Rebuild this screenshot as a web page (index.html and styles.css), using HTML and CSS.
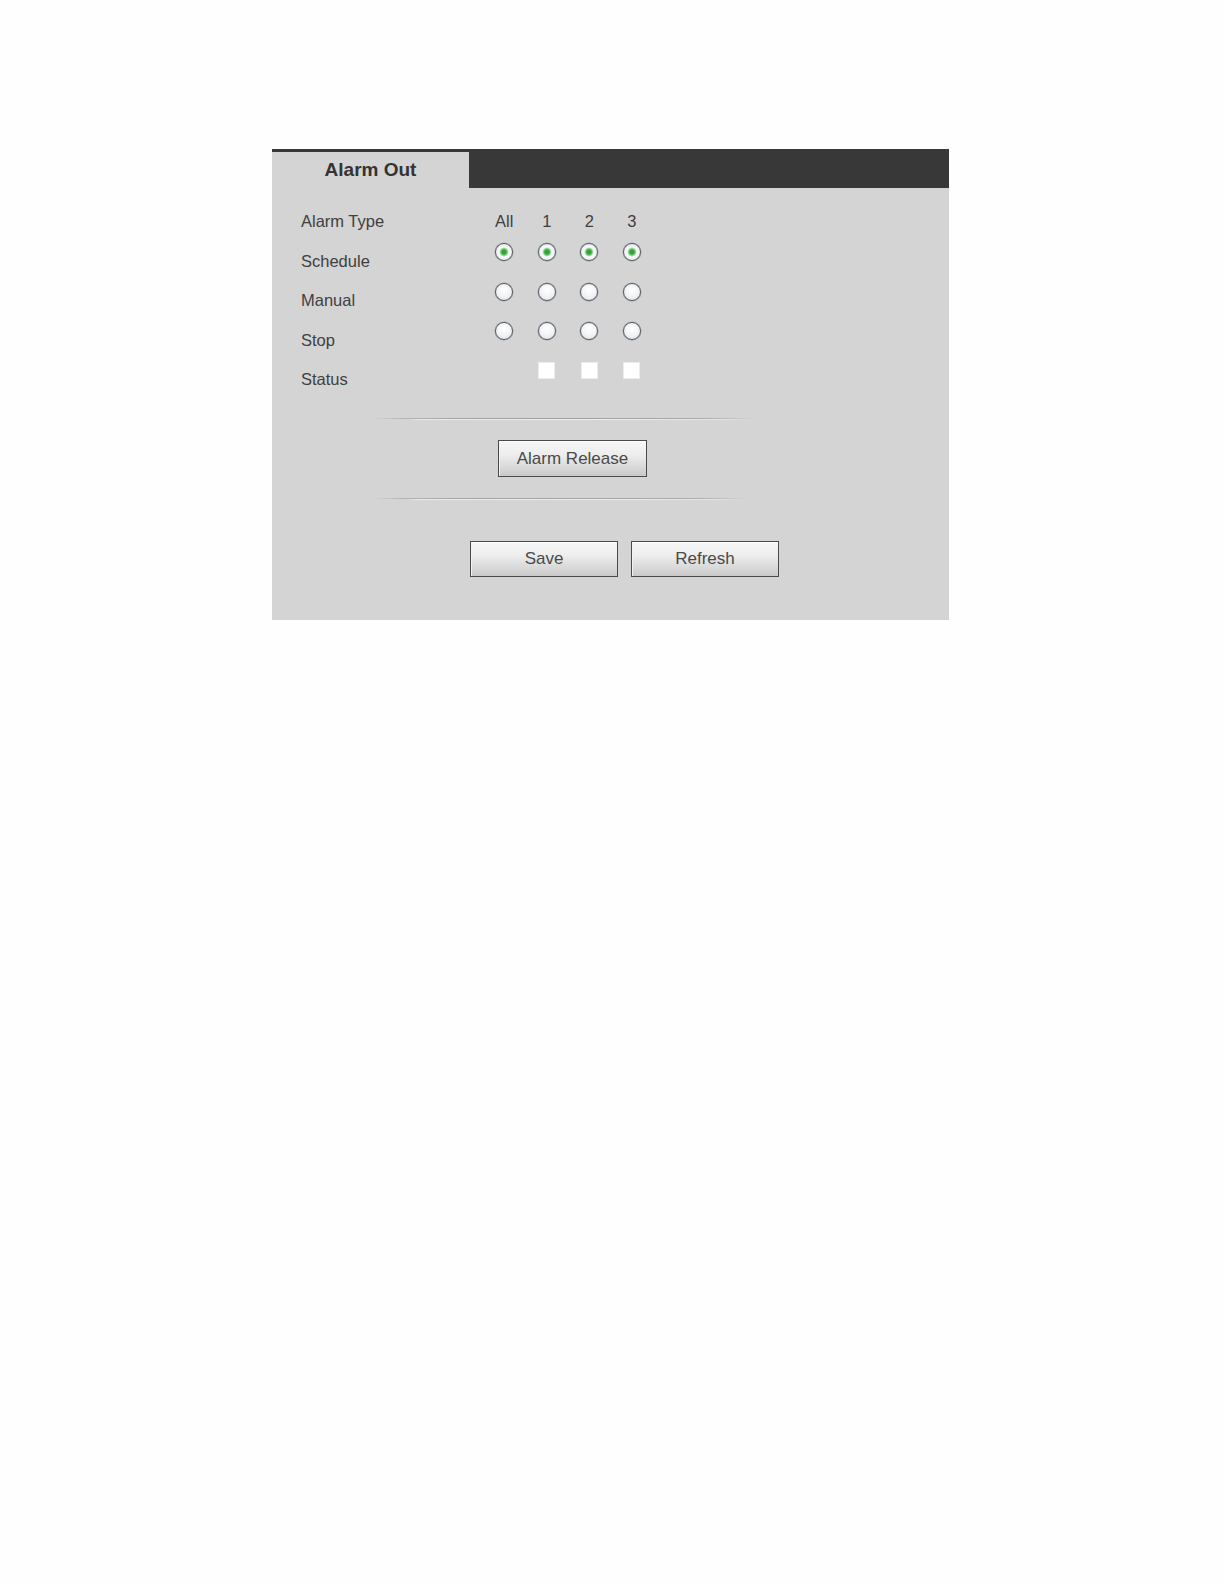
FILE: index.html
```html
<!DOCTYPE html>
<html lang="en">
<head>
<meta charset="utf-8">
<title>Alarm Out</title>
<link rel="stylesheet" href="styles.css">
</head>
<body>
<div class="page">
  <div class="panel">
    <div class="header">
      <div class="tab">Alarm Out</div>
    </div>
    <div class="form">
      <div class="grid">
        <div class="row">
          <div class="label">Alarm Type</div>
          <div class="cell head">All</div>
          <div class="cell head">1</div>
          <div class="cell head">2</div>
          <div class="cell head">3</div>
        </div>
        <div class="row">
          <div class="label">Schedule</div>
          <div class="cell"><span class="radio checked"></span></div>
          <div class="cell"><span class="radio checked"></span></div>
          <div class="cell"><span class="radio checked"></span></div>
          <div class="cell"><span class="radio checked"></span></div>
        </div>
        <div class="row">
          <div class="label">Manual</div>
          <div class="cell"><span class="radio"></span></div>
          <div class="cell"><span class="radio"></span></div>
          <div class="cell"><span class="radio"></span></div>
          <div class="cell"><span class="radio"></span></div>
        </div>
        <div class="row">
          <div class="label">Stop</div>
          <div class="cell"><span class="radio"></span></div>
          <div class="cell"><span class="radio"></span></div>
          <div class="cell"><span class="radio"></span></div>
          <div class="cell"><span class="radio"></span></div>
        </div>
        <div class="row">
          <div class="label">Status</div>
          <div class="cell"></div>
          <div class="cell"><span class="check"></span></div>
          <div class="cell"><span class="check"></span></div>
          <div class="cell"><span class="check"></span></div>
        </div>
      </div>
      <div class="divider divider-a"></div>
      <div class="release-row">
        <button class="btn btn-release" type="button">Alarm Release</button>
      </div>
      <div class="divider divider-b"></div>
      <div class="actions">
        <button class="btn btn-action" type="button">Save</button>
        <button class="btn btn-action" type="button">Refresh</button>
      </div>
    </div>
  </div>
</div>
</body>
</html>
```

FILE: styles.css
```css
html, body {
  margin: 0;
  padding: 0;
  background: #fefefe;
}

body {
  font-family: "Liberation Sans", Arial, sans-serif;
  color: #404040;
}

.page {
  padding: 149px 0 0 272px;
}

.panel {
  width: 677px;
  background: #d4d4d4;
}

.header {
  height: 39px;
  background: #383838;
  display: flex;
  align-items: flex-end;
}

.tab {
  width: 197px;
  height: 36px;
  line-height: 36px;
  background: #d4d4d4;
  text-align: center;
  font-size: 19px;
  font-weight: bold;
  color: #333;
}

.form {
  padding: 15.5px 0 43px 29px;
}

.row {
  display: flex;
  align-items: flex-start;
  height: 39.5px;
}

.label {
  width: 182px;
  padding-top: 7.5px;
  font-size: 16.5px;
  line-height: 20px;
  color: #404040;
}

.cell {
  width: 42.5px;
  display: flex;
  justify-content: center;
}

.cell.head {
  padding-top: 7.5px;
  font-size: 16.5px;
  line-height: 20px;
  color: #404040;
}

.radio {
  box-sizing: border-box;
  width: 18px;
  height: 18px;
  border: 1.6px solid #545a62;
  border-radius: 50%;
  background: radial-gradient(circle at 50% 35%, #ffffff 0, #f4f5f6 45%, #dfe2e5 100%);
  box-shadow: 0 0 0 0.5px #9aa0a6;
}

.radio.checked {
  background: radial-gradient(circle at 50% 50%, #2f9e35 0, #36a83c 2.2px, #8fd694 3.6px, #f6faf6 4.8px, #eef0f1 70%, #dde0e3 100%);
}

.check {
  box-sizing: border-box;
  width: 17px;
  height: 17px;
  background: #ffffff;
  border: 1px solid #ececec;
}

.divider {
  height: 2px;
  margin-left: 97px;
}

.divider-a {
  width: 384px;
  margin-top: 17px;
  background:
    linear-gradient(to right, rgba(170,170,170,0) 0, #b4b4b4 8%, #a2a2a2 22%, #a0a0a0 55%, #aaaaaa 85%, rgba(180,180,180,0) 100%) top / 100% 1px no-repeat,
    linear-gradient(to right, rgba(240,240,240,0) 0, rgba(240,240,240,0) 9%, #ebebeb 12%, #eeeeee 60%, #e4e4e4 90%, rgba(230,230,230,0) 100%) bottom / 100% 1px no-repeat;
}

.divider-b {
  width: 376px;
  margin-top: 21px;
  background:
    linear-gradient(to right, rgba(170,170,170,0) 0, #b4b4b4 8%, #a4a4a4 22%, #a2a2a2 55%, #ababab 85%, rgba(180,180,180,0) 100%) top / 100% 1px no-repeat,
    linear-gradient(to right, rgba(240,240,240,0) 0, rgba(240,240,240,0) 9%, #ebebeb 12%, #eeeeee 60%, #e4e4e4 90%, rgba(230,230,230,0) 100%) bottom / 100% 1px no-repeat;
}

.divider-a, .divider-b {
  margin-left: 72px;
}

.release-row {
  margin-top: 20px;
  padding-left: 197px;
  display: flex;
}

.btn {
  box-sizing: border-box;
  border: 1px solid #4a4a4a;
  background: linear-gradient(to bottom, #f7f7f7 0%, #ededed 40%, #d9d9d9 75%, #c9c9c9 100%);
  box-shadow: inset 0 1px 0 #ffffff, inset 1px 0 0 #f2f2f2;
  font-family: "Liberation Sans", Arial, sans-serif;
  font-size: 17px;
  color: #4a4a4a;
  padding: 0;
  margin: 0;
  text-align: center;
}

.btn-release {
  width: 149px;
  height: 37px;
}

.actions {
  margin-top: 41px;
  padding-left: 169px;
  display: flex;
  gap: 13px;
}

.btn-action {
  width: 148px;
  height: 36px;
}
```
